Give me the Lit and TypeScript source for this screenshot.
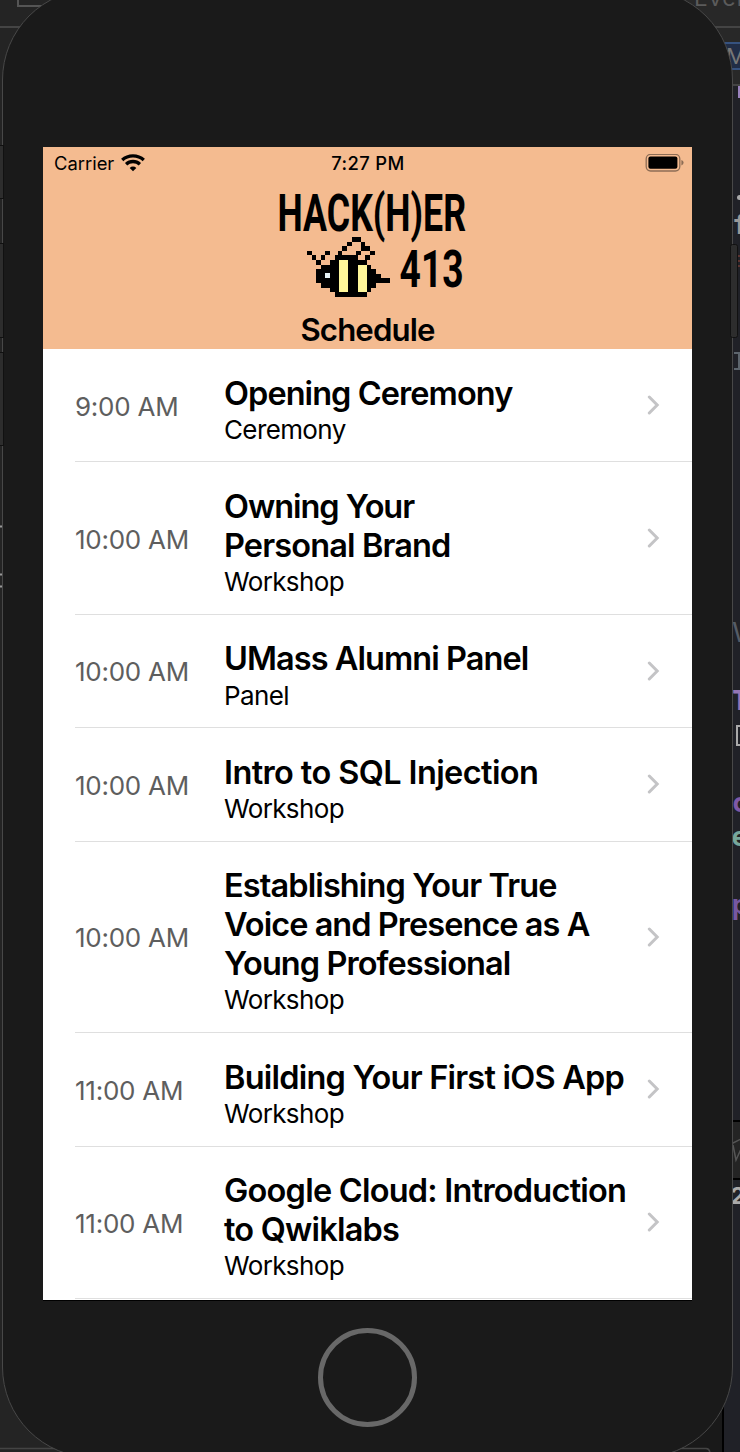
import { LitElement, html, css, svg } from "lit";
import { customElement, property } from "lit/decorators.js";
import { styleMap } from "lit/directives/style-map.js";

interface Line {
  text: string;
  tracking: number;
}

interface EventItem {
  time: string;
  lines: Line[];
  kind: string;
}

const line = (text: string, tracking: number): Line => ({ text, tracking });

const EVENTS: EventItem[] = [
  { time: "9:00 AM", lines: [line("Opening Ceremony", -0.94)], kind: "Ceremony" },
  { time: "10:00 AM", lines: [line("Owning Your", -1.05), line("Personal Brand", -0.86)], kind: "Workshop" },
  { time: "10:00 AM", lines: [line("UMass Alumni Panel", -0.94)], kind: "Panel" },
  { time: "10:00 AM", lines: [line("Intro to SQL Injection", -0.61)], kind: "Workshop" },
  {
    time: "10:00 AM",
    lines: [line("Establishing Your True", -0.89), line("Voice and Presence as A", -0.96), line("Young Professional", -0.94)],
    kind: "Workshop",
  },
  { time: "11:00 AM", lines: [line("Building Your First iOS App", -0.79)], kind: "Workshop" },
  { time: "11:00 AM", lines: [line("Google Cloud: Introduction", -0.77), line("to Qwiklabs", -0.8)], kind: "Workshop" },
];

// [row, first column, column count]
const BODY = [
  [3, 0, 1], [3, 4, 1], [4, 1, 1], [4, 3, 1], [5, 2, 1],
  [4, 6, 5], [5, 5, 8], [6, 3, 11], [7, 2, 13], [8, 2, 14],
  [9, 2, 16], [10, 3, 12], [11, 5, 9], [12, 6, 7],
];
const WINGS = [
  [0, 10, 2], [1, 9, 1], [1, 12, 1], [2, 8, 1], [2, 12, 2],
  [3, 7, 1], [3, 11, 1], [3, 14, 1], [4, 13, 1],
];

@customElement("hack-logo")
export class HackLogo extends LitElement {
  static styles = css`
    :host { display: block; height: 112px; }
    svg { display: block; }
    .word { font-family: Roboto, sans-serif; font-weight: 700; font-size: 52.5px; }
  `;
  render() {
    const cell = ([r, c, n]: number[]) =>
      svg`<rect x=${c * 4.6} y=${r * 4.6} width=${n * 4.6} height="4.6"></rect>`;
    return html`
      <svg width="192" height="112" viewBox="276 190 192 112">
        <text class="word" x="277.6" y="230.700" textLength="188.400" lengthAdjust="spacingAndGlyphs">HACK(H)ER</text>
        <text class="word" x="399.600" y="287" textLength="64" lengthAdjust="spacingAndGlyphs">413</text>
        <g transform="translate(307 237)" shape-rendering="crispEdges">
          ${BODY.map(cell)}
          <g transform="translate(-1.5 0)">${WINGS.map(cell)}</g>
          <rect x="32.2" y="23" width="9.2" height="32.2" fill="#fff79a"></rect>
          <rect x="50.6" y="27.6" width="9.2" height="27.6" fill="#fff79a"></rect>
          <rect x="18" y="36" width="5" height="5" fill="#e6f1f5"></rect>
        </g>
      </svg>
    `;
  }
}

@customElement("status-bar")
export class StatusBar extends LitElement {
  static styles = css`
    :host {
      display: grid; grid-template-columns: 1fr auto 1fr; align-items: center;
      height: 32px; padding: 0 8px 0 11px; font-size: 18.4px; line-height: 32px;
    }
    .left { display: flex; align-items: center; gap: 7px; }
    .carrier { width: 60px; white-space: nowrap; }
    .time { font-weight: 550; letter-spacing: 0.38px; transform: translateX(-1px); }
    .battery { justify-self: end; display: block; }
  `;
  render() {
    return html`
      <div class="left">
        <span class="carrier">Carrier</span>
        <svg width="24" height="18" viewBox="0 0 24 18" fill="none" stroke="#000" stroke-width="3.3">
          <path d="M1.2 6C7.2 .5 16.8 .5 22.8 6"></path>
          <path d="M5.1 10.2C9 6.6 15 6.6 18.9 10.2"></path>
          <path d="M12 17.2L8.7 13.9C10.6 12.1 13.4 12.1 15.3 13.9Z" fill="#000" stroke="none"></path>
        </svg>
      </div>
      <span class="time">7:27 PM</span>
      <svg class="battery" width="39" height="18" viewBox="645 154 39 18">
        <rect x="646.2" y="154.4" width="33.6" height="16.6" rx="4.4" fill="none" stroke="#8d6d55" stroke-width="1.3"></rect>
        <rect x="648.4" y="156.6" width="29" height="12.2" rx="2" fill="#000"></rect>
        <path d="M681.4 160Q683.6 160.9 683.6 162.700T681.4 165.4Z" fill="#8d6d55"></path>
      </svg>
    `;
  }
}

@customElement("event-row")
export class EventRow extends LitElement {
  @property({ attribute: false }) item!: EventItem;
  static styles = css`
    :host { display: flex; align-items: center; margin-left: 32px; border-bottom: 1px solid #dfdfdf; padding: 24.6px 32px 16.7px 0; color: #000; }
    .time { flex: 0 0 149px; font-size: 26px; letter-spacing: -0.25px; color: #5e5e5e; transform: translateY(-3px); white-space: nowrap; }
    .text { flex: 1; white-space: nowrap; }
    .title { font-size: 32.5px; line-height: 39.1px; font-weight: 600; }
    .kind { font-size: 26px; line-height: 31px; letter-spacing: -0.62px; padding-top: 1px; }
    svg { display: block; flex: none; transform: translateY(-4px); }
  `;
  render() {
    return html`
      <span class="time">${this.item.time}</span>
      <div class="text">
        ${this.item.lines.map(
          (l) => html`<div class="title" style=${styleMap({ letterSpacing: `${l.tracking}px` })}>${l.text}</div>`
        )}
        <div class="kind">${this.item.kind}</div>
      </div>
      <svg width="13" height="20" viewBox="0 0 13 20" fill="none" stroke="#c4c4c6" stroke-width="3" stroke-linecap="round" stroke-linejoin="miter">
        <path d="M2.3 2L10.2 10L2.3 18"></path>
      </svg>
    `;
  }
}

@customElement("app-root")
export class AppRoot extends LitElement {
  static styles = css`
    :host { display: block; position: relative; width: 740px; height: 1452px; overflow: hidden; background: #202127; font-family: Inter, "Liberation Sans", sans-serif; color: #000; }
    .desktop { position: absolute; inset: 0; }
    .buttons { position: absolute; inset: 0; }
    .ui { font-family: Inter, sans-serif; }
    .code { font-family: "DejaVu Sans Mono", monospace; font-size: 27px; }
    .phone {
      position: absolute; left: 2px; top: -11px; width: 731px; height: 1469px; box-sizing: border-box;
      border: 1px solid #484848; border-radius: 91px; background: #1a1a1a;
      display: flex; flex-direction: column; align-items: center; padding-top: 157px;
    }
    .screen { width: 649px; height: 1153px; flex: none; background: #fff; overflow: hidden; box-shadow: 0 1px 0 #000; }
    .header { height: 202px; background: #f4bb90; display: flex; flex-direction: column; }
    .brand { display: flex; justify-content: center; padding: 11px 0 0 8px; }
    .heading { text-align: center; font-size: 31.2px; line-height: 40px; font-weight: 590; letter-spacing: -0.88px; margin: 8px 0 0; }
    .home { width: 99px; height: 99px; box-sizing: border-box; border: 5px solid #686868; border-radius: 50%; margin-top: 28px; flex: none; }
  `;
  render() {
    return html`
      <svg class="desktop" width="740" height="1452" viewBox="0 0 740 1452">
        <rect width="60" height="1452" fill="#242424"></rect>
        <rect x="680" width="60" height="86" fill="#282828"></rect>
        <path d="M18 -4V6H50" fill="none" stroke="#555" stroke-width="2"></path>
        <path d="M0 27H30M700 27H740M725 85H740" stroke="#444" stroke-width="2"></path>
        <text class="ui" x="694" y="6" font-size="23" letter-spacing="1" fill="#5b5b5b">Ever</text>
        <rect x="718" y="43" width="30" height="26" fill="#212d46" stroke="#36527f" stroke-width="2"></rect>
        <text class="ui" x="726" y="64" font-size="22" fill="#777">M</text>
        <rect x="738" y="86" width="2" height="12" fill="#9a83bd"></rect>
        <g class="code">
          <circle cx="739.5" cy="197.5" r="2.5" fill="#aaa"></circle>
          <text x="732" y="234" fill="#999" font-weight="700">f</text>
          <path d="M737 256H740M737 261H740M737 266H740" stroke="#5c3330" stroke-width="2"></path>
          <path d="M734 353H739V369H734" fill="none" stroke="#5d656d" stroke-width="2"></path>
          <text x="732" y="642" fill="#555c66">V</text>
          <text x="732" y="710" fill="#9476b5" font-weight="700">T</text>
          <path d="M742 726H737V745H742" fill="none" stroke="#aaa" stroke-width="2"></path>
          <text x="731.500" y="812" fill="#7e59a6" font-weight="700">c</text>
          <text x="731.500" y="846" fill="#77a79c" font-weight="700">e</text>
          <text x="731.500" y="914" fill="#7658a0" font-weight="700">p</text>
        </g>
        <rect x="731" y="1120" width="9" height="59" fill="#242424"></rect>
        <path d="M731 1121H740M731 1179H740" stroke="#000" stroke-width="2"></path>
        <path d="M731 1144L741 1139M733 1145L736 1160L741 1149" fill="none" stroke="#555" stroke-width="1.5"></path>
        <text class="ui" x="730.500" y="1204" font-size="23" font-weight="700" fill="#aaa">2</text>
        <rect x="660" y="1370" width="62" height="82" fill="#191919"></rect>
        <rect x="722" y="1370" width="2" height="82" fill="#000"></rect>
        <path d="M670 1448.5H706Q710 1448.5 710 1454M0 1448.5H60" fill="none" stroke="#444" stroke-width="1.5"></path>
      </svg>
      <div class="phone">
        <div class="screen">
          <div class="header">
            <status-bar></status-bar>
            <div class="brand"><hack-logo></hack-logo></div>
            <h1 class="heading">Schedule</h1>
          </div>
          ${EVENTS.map((e) => html`<event-row .item=${e}></event-row>`)}
        </div>
        <div class="home"></div>
      </div>
      <svg class="buttons" width="740" height="1452" viewBox="0 0 740 1452">
        <g fill="#2d2d2d" stroke="#111" stroke-width="1">
          <rect x="-4" y="145.500" width="7.500" height="53"></rect>
          <rect x="-4" y="243.500" width="7.500" height="94"></rect>
          <rect x="-4" y="352.500" width="7.500" height="93"></rect>
          <rect x="730.500" y="244.500" width="7" height="93" rx="2"></rect>
        </g>
        <path d="M0 526.500H2M0 574.500H2M0 586.500H2" stroke="#999" stroke-width="2"></path>
      </svg>
    `;
  }
}
